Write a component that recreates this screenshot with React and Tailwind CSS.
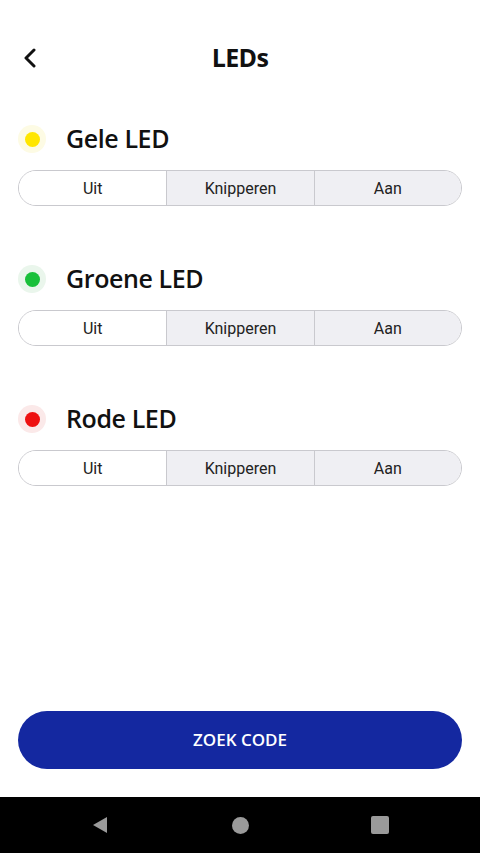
export default function App() {
  const leds = [
    { name: 'Gele LED', dot: 'bg-[#ffe600]', halo: 'bg-[#fdfbe4]' },
    { name: 'Groene LED', dot: 'bg-[#19c03a]', halo: 'bg-[#eaf6ec]' },
    { name: 'Rode LED', dot: 'bg-[#ee1111]', halo: 'bg-[#fbe9e9]' },
  ];
  const options = ['Uit', 'Knipperen', 'Aan'];

  return (
    <div className="h-[853px] w-[480px] bg-white flex flex-col overflow-hidden" style={{ fontFamily: 'Roboto, "Open Sans", sans-serif' }}>
      {/* Header */}
      <div className="relative mt-[38px] h-[40px] flex items-center justify-center">
        <button className="absolute left-[18px] top-[8px] w-[24px] h-[24px] flex items-center justify-center">
          <svg width="14" height="20" viewBox="0 0 14 20" fill="none">
            <path d="M11 2 L3 10 L11 18" stroke="#111" strokeWidth="3" strokeLinecap="round" strokeLinejoin="round" />
          </svg>
        </button>
        <h1 className="text-[25px] font-bold text-[#111] tracking-tight" style={{ fontFamily: '"Open Sans", sans-serif' }}>LEDs</h1>
      </div>

      {/* LEDs */}
      <div className="mt-[43px] flex flex-col gap-[55px] px-[18px]">
        {leds.map(led => (
          <div key={led.name}>
            <div className="h-[36px] flex items-center gap-[20px]">
              <div className={`w-[28px] h-[28px] rounded-full flex items-center justify-center ${led.halo}`}>
                <div className={`w-[15px] h-[15px] rounded-full ${led.dot}`} />
              </div>
              <span className="text-[25px] font-semibold text-[#111] tracking-[-0.4px]" style={{ fontFamily: '"Open Sans", sans-serif' }}>{led.name}</span>
            </div>
            <div className="mt-[13px] h-[36px] grid grid-cols-3 rounded-full border border-[#c9c9ce] overflow-hidden">
              {options.map((o, i) => (
                <div
                  key={o}
                  className={`flex items-center justify-center pt-[2px] text-[16px] text-[#222] ${i === 0 ? 'bg-white' : 'bg-[#efeff3]'} ${i > 0 ? 'border-l border-[#c9c9ce]' : ''}`}
                >
                  {o}
                </div>
              ))}
            </div>
          </div>
        ))}
      </div>

      <div className="flex-1" />

      {/* Button */}
      <div className="px-[18px] mb-[28px]">
        <button className="w-full h-[58px] rounded-full bg-[#1428a0] text-white text-[17px] font-semibold" style={{ fontFamily: '"Open Sans", sans-serif' }}>
          ZOEK CODE
        </button>
      </div>

      {/* Nav bar */}
      <div className="h-[56px] bg-black flex items-center justify-between px-[91px]">
        <svg width="18" height="20" viewBox="0 0 18 20"><path d="M16 2 L16 18 L2 10 Z" fill="#9a9a9a" /></svg>
        <div className="w-[17px] h-[17px] rounded-full bg-[#9a9a9a]" />
        <div className="w-[18px] h-[18px] rounded-[2px] bg-[#9a9a9a]" />
      </div>
    </div>
  );
}
